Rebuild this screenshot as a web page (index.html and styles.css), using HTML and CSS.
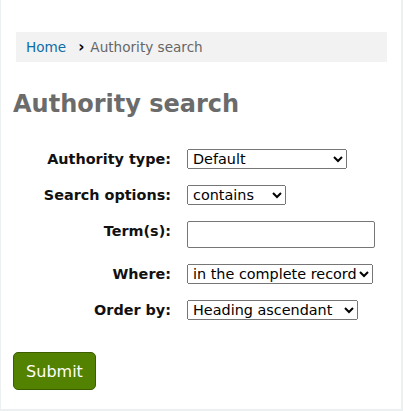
FILE: index.html
```html
<!DOCTYPE html>
<html>
<head>
<meta charset="utf-8">
<link rel="stylesheet" href="styles.css">
</head>
<body>
<div class="page">
  <nav class="crumbs">
    <a href="#" class="crumb-link">Home</a>
    <span class="sep">›</span>
    <span class="crumb-current">Authority search</span>
  </nav>
  <h1 class="title">Authority search</h1>
  <form class="search-form">
    <div class="fields">
      <label class="lbl">Authority type:</label>
      <select class="sel sel-type"><option>Default</option></select>
      <label class="lbl">Search options:</label>
      <select class="sel sel-opt"><option>contains</option></select>
      <label class="lbl lbl-term">Term(s):</label>
      <input type="text" class="term">
      <label class="lbl">Where:</label>
      <select class="sel sel-where"><option>in the complete record</option></select>
      <label class="lbl">Order by:</label>
      <select class="sel sel-order"><option>Heading ascendant</option></select>
    </div>
    <button type="button" class="submit">Submit</button>
  </form>
</div>
</body>
</html>
```
FILE: styles.css
```css
html, body {
  margin: 0;
  padding: 0;
}
body {
  background: #edf0f0;
  font-family: "DejaVu Sans", sans-serif;
  width: 403px;
  height: 411px;
  overflow: hidden;
}
.page {
  background: #fff;
  margin: 0 2px 0 1px;
  height: 409px;
  padding: 32px 0 0 0;
  box-sizing: border-box;
}
.crumbs {
  background: #f2f2f2;
  margin: 0 14px 0 15px;
  height: 30px;
  display: flex;
  align-items: center;
  padding-left: 10px;
  font-size: 13.6px;
}
.crumb-link {
  color: #0d6ba6;
  text-decoration: none;
}
.sep {
  color: #000;
  font-weight: bold;
  margin: 0 6px 0 12px;
  font-size: 15px;
  line-height: 1;
}
.crumb-current {
  color: #666;
}
.title {
  margin: 27px 0 0 12px;
  font-size: 24px;
  line-height: 30px;
  color: #6b6b6b;
  font-weight: bold;
}
.search-form {
  margin: 0 0 0 12px;
}
.fields {
  display: grid;
  grid-template-columns: 158px auto;
  column-gap: 16px;
  row-gap: 16px;
  margin-top: 30px;
  justify-items: start;
  align-items: start;
}
.lbl {
  justify-self: end;
  font-weight: bold;
  font-size: 14.4px;
  line-height: 20px;
  color: #111;
}
.lbl-term {
  line-height: 20px;
}
.sel {
  font-family: "DejaVu Sans", sans-serif;
  font-size: 14.4px;
  height: 20px;
  margin: 0;
  padding: 0 0 0 1px;
  color: #000;
}
.sel-type { width: 160px; }
.sel-opt { width: 99px; }
.sel-where { width: 186px; }
.sel-order { width: 171px; }
.term {
  width: 188px;
  height: 27px;
  box-sizing: border-box;
  margin: 0;
  border: 1px solid #767676;
  border-radius: 2px;
  font-family: "DejaVu Sans", sans-serif;
  font-size: 14.4px;
}
.submit {
  margin-top: 32px;
  width: 83px;
  height: 38px;
  background: #538200;
  border: 1px solid #3c5e00;
  border-radius: 5px;
  color: #fff;
  font-family: "DejaVu Sans", sans-serif;
  font-size: 16px;
  padding: 0;
}
```
